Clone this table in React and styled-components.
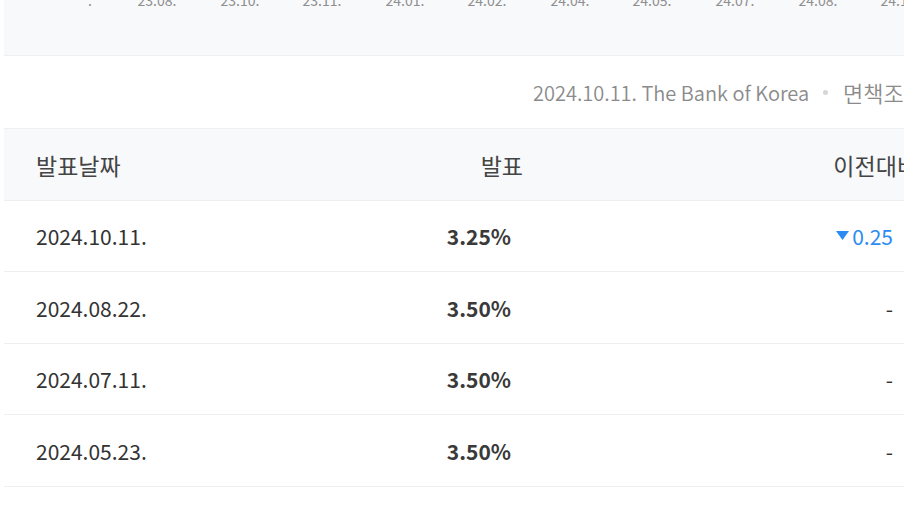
import React from "react";
import styled, { createGlobalStyle } from "styled-components";

const Global = createGlobalStyle`
  html, body { margin: 0; padding: 0; overflow: hidden; background: #fff; }
  body { font-family: "Noto Sans CJK KR", "Noto Sans", sans-serif; color: #333; }
`;

const Page = styled.div`
  width: 960px;
  padding-left: 4px;
  box-sizing: border-box;
`;

const ChartArea = styled.div`
  background: #f8f9fb;
  height: 55px;
  border-bottom: 1px solid #eeeff1;
  overflow: hidden;
`;

const SourceRow = styled.div`
  height: 72px;
  display: flex;
  align-items: center;
  justify-content: flex-start;
  padding-left: 529px;
  font-size: 20px;
  font-weight: 350;
  color: #8b8b8b;
  white-space: nowrap;
`;

const Disclaimer = styled.span`
  font-size: 22px;
`;

const Dot = styled.span`
  display: inline-block;
  width: 5px;
  height: 5px;
  border-radius: 50%;
  background: #d6d6d6;
  margin: 0 15px 0 14px;
`;

const Table = styled.div`
  display: flex;
  flex-direction: column;
  border-top: 1px solid #eeeff1;
`;

const Row = styled.div`
  display: grid;
  grid-template-columns: 296px 240px 1fr;
  align-items: center;
  height: ${(p) => p.$h}px;
  box-sizing: border-box;
  border-bottom: 1px solid #efefef;
  background: ${(p) => (p.$head ? "#f8f9fb" : "#fff")};
  font-size: ${(p) => (p.$head ? 23 : 21)}px;
  color: ${(p) => (p.$head ? "#444" : "#333")};
`;

const DateCell = styled.div`
  padding-left: 32px;
`;

const ValueCell = styled.div`
  text-align: right;
  padding-right: ${(p) => (p.$head ? 17 : 29)}px;
  font-weight: ${(p) => (p.$head ? 400 : 700)};
  color: ${(p) => (p.$head ? "#444" : "#3a3a3a")};
`;

const ChangeCell = styled.div`
  text-align: right;
  padding-right: ${(p) => (p.$head ? 42 : 67)}px;
  color: ${(p) => (p.$down ? "#2a8cf2" : "inherit")};
  display: flex;
  justify-content: flex-end;
  align-items: center;
  gap: 3px;
`;

const Tri = styled.svg`
  width: 13px;
  height: 10px;
`;

const axis = [
  { x: 92, t: "." },
  { x: 157, t: "23.08." },
  { x: 240, t: "23.10." },
  { x: 322, t: "23.11." },
  { x: 405, t: "24.01." },
  { x: 487, t: "24.02." },
  { x: 570, t: "24.04." },
  { x: 652, t: "24.05." },
  { x: 735, t: "24.07." },
  { x: 818, t: "24.08." },
  { x: 900, t: "24.10." },
];

const rows = [
  { d: "2024.10.11.", v: "3.25%", c: "0.25", down: true, h: 71 },
  { d: "2024.08.22.", v: "3.50%", c: "-", h: 72 },
  { d: "2024.07.11.", v: "3.50%", c: "-", h: 71 },
  { d: "2024.05.23.", v: "3.50%", c: "-", h: 72 },
];

export default function App() {
  return (
    <Page>
      <Global />
      <ChartArea>
        <svg width="956" height="55">
          {axis.map((a) => (
            <text
              key={a.x}
              x={a.x - 4}
              y={6}
              textAnchor={a.t === "." ? "end" : "middle"}
              fontSize="14"
              fill="#8e8e8e"
              fontFamily="Noto Sans CJK KR, sans-serif"
              fontWeight="400"
            >
              {a.t}
            </text>
          ))}
        </svg>
      </ChartArea>
      <SourceRow>
        2024.10.11. The Bank of Korea
        <Dot />
        <Disclaimer>면책조항</Disclaimer>
      </SourceRow>
      <Table>
        <Row $head $h={72}>
          <DateCell>발표날짜</DateCell>
          <ValueCell $head>발표</ValueCell>
          <ChangeCell $head>이전대비</ChangeCell>
        </Row>
        {rows.map((r) => (
          <Row key={r.d} $h={r.h}>
            <DateCell>{r.d}</DateCell>
            <ValueCell>{r.v}</ValueCell>
            <ChangeCell $down={r.down}>
              {r.down && (
                <Tri viewBox="0 0 13 10">
                  <path d="M0 0 H13 L6.5 9 Z" fill="#2a8cf2" />
                </Tri>
              )}
              {r.c}
            </ChangeCell>
          </Row>
        ))}
      </Table>
    </Page>
  );
}
